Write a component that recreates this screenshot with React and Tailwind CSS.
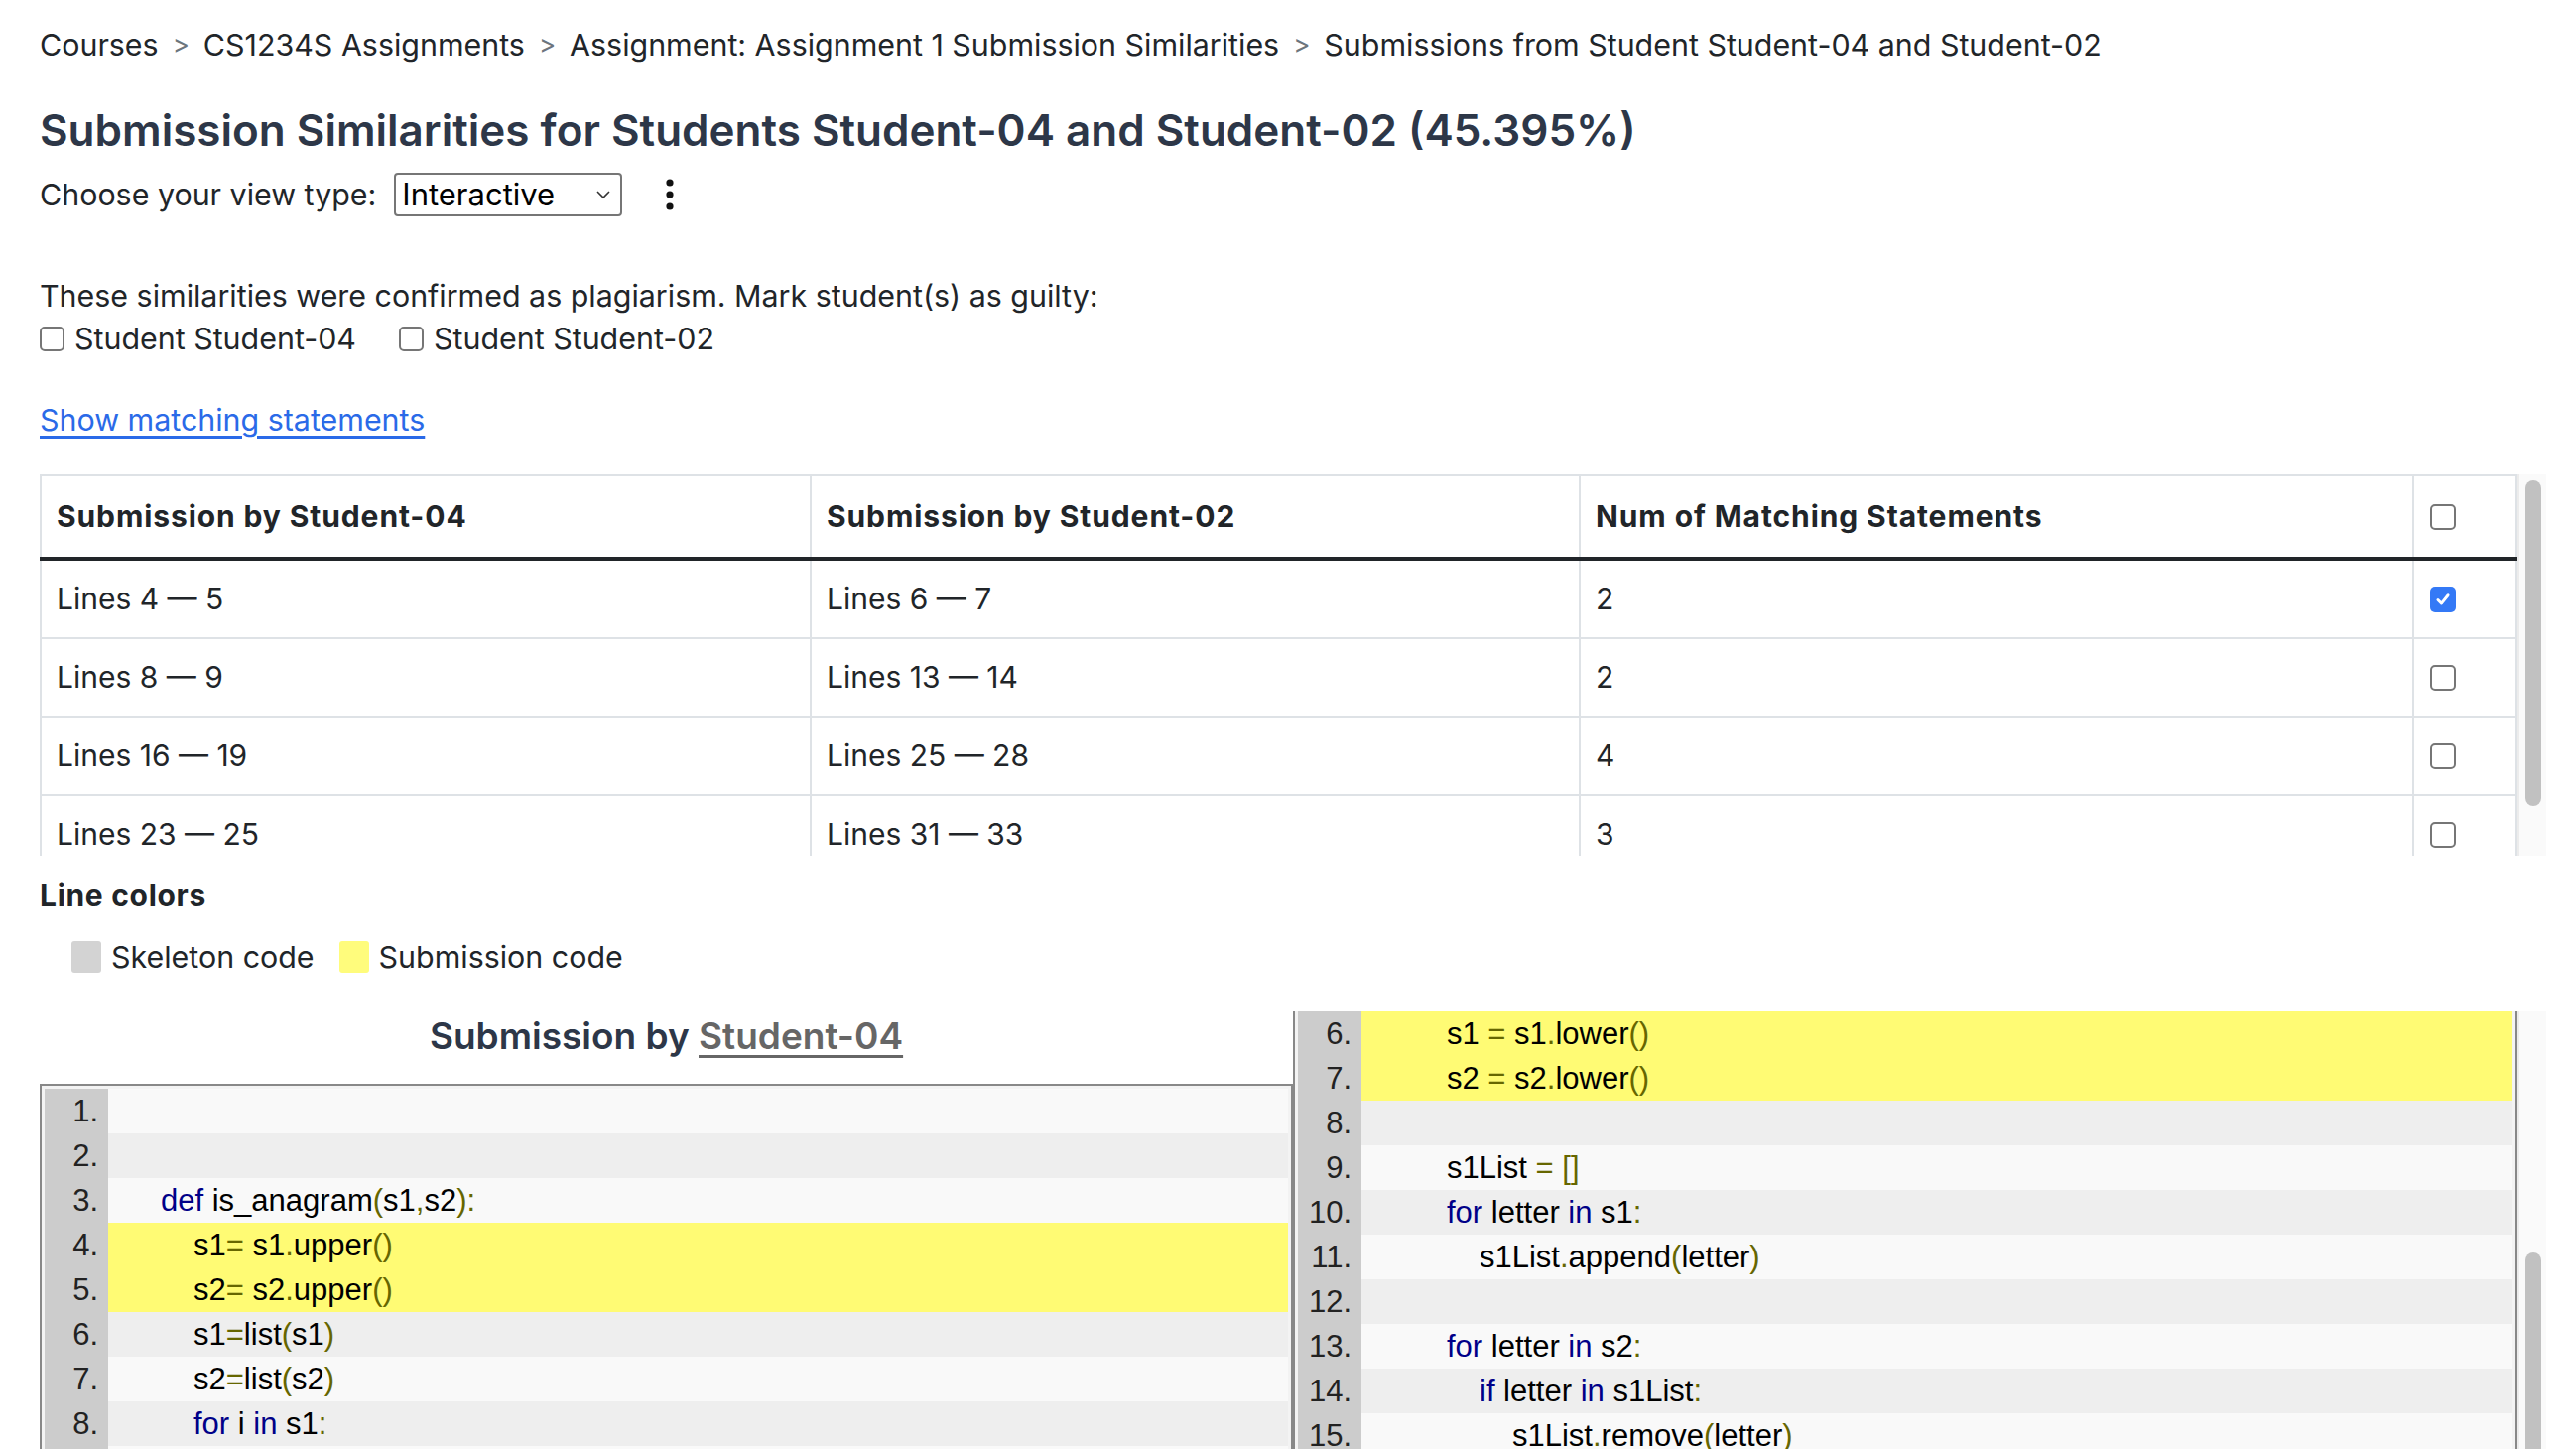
import React, { useLayoutEffect, useRef } from "react";

const TOK = { k: "text-[#000088]", p: "text-[#666600]", t: "text-black" };

const leftCode = [
  [0, []],
  [0, []],
  [0, [["k", "def"], ["t", " is_anagram"], ["p", "("], ["t", "s1"], ["p", ","], ["t", "s2"], ["p", "):"]]],
  [1, [["t", "s1"], ["p", "="], ["t", " s1"], ["p", "."], ["t", "upper"], ["p", "()"]]],
  [1, [["t", "s2"], ["p", "="], ["t", " s2"], ["p", "."], ["t", "upper"], ["p", "()"]]],
  [1, [["t", "s1"], ["p", "="], ["t", "list"], ["p", "("], ["t", "s1"], ["p", ")"]]],
  [1, [["t", "s2"], ["p", "="], ["t", "list"], ["p", "("], ["t", "s2"], ["p", ")"]]],
  [1, [["k", "for"], ["t", " i "], ["k", "in"], ["t", " s1"], ["p", ":"]]],
  [2, [["k", "if"], ["t", " i "], ["k", "in"], ["t", " s2"], ["p", ":"]]],
  [3, [["t", "s2"], ["p", "."], ["t", "remove"], ["p", "("], ["t", "i"], ["p", ")"]]],
  [2, [["k", "else"], ["p", ":"]]],
  [3, [["k", "return"], ["t", " False"]]],
];

const rightCode = [
  [0, []],
  [0, []],
  [0, [["k", "def"], ["t", " is_anagram"], ["p", "("], ["t", "s1"], ["p", ","], ["t", " s2"], ["p", "):"]]],
  [1, [["t", "s1 "], ["p", "="], ["t", " s1"], ["p", "."], ["t", "replace"], ["p", "("], ["t", "' '"], ["p", ","], ["t", " ''"], ["p", ")"]]],
  [1, [["t", "s2 "], ["p", "="], ["t", " s2"], ["p", "."], ["t", "replace"], ["p", "("], ["t", "' '"], ["p", ","], ["t", " ''"], ["p", ")"]]],
  [1, [["t", "s1 "], ["p", "="], ["t", " s1"], ["p", "."], ["t", "lower"], ["p", "()"]]],
  [1, [["t", "s2 "], ["p", "="], ["t", " s2"], ["p", "."], ["t", "lower"], ["p", "()"]]],
  [0, []],
  [1, [["t", "s1List "], ["p", "="], ["t", " "], ["p", "[]"]]],
  [1, [["k", "for"], ["t", " letter "], ["k", "in"], ["t", " s1"], ["p", ":"]]],
  [2, [["t", "s1List"], ["p", "."], ["t", "append"], ["p", "("], ["t", "letter"], ["p", ")"]]],
  [0, []],
  [1, [["k", "for"], ["t", " letter "], ["k", "in"], ["t", " s2"], ["p", ":"]]],
  [2, [["k", "if"], ["t", " letter "], ["k", "in"], ["t", " s1List"], ["p", ":"]]],
  [3, [["t", "s1List"], ["p", "."], ["t", "remove"], ["p", "("], ["t", "letter"], ["p", ")"]]],
  [2, [["k", "else"], ["p", ":"]]],
  [3, [["k", "return"], ["t", " False"]]],
  [0, []],
  [1, [["k", "return"], ["t", " len"], ["p", "("], ["t", "s1List"], ["p", ")"], ["t", " "], ["p", "=="], ["t", " 0"]]],
  [0, []],
  [0, []],
  [0, [["k", "def"], ["t", " main"], ["p", "():"]]],
  [1, [["t", "word1 "], ["p", "="], ["t", " input"], ["p", "("], ["t", "\"First word: \""], ["p", ")"]]],
  [1, [["t", "word2 "], ["p", "="], ["t", " input"], ["p", "("], ["t", "\"Second word: \""], ["p", ")"]]],
  [0, []],
  [1, [["k", "if"], ["t", " is_anagram"], ["p", "("], ["t", "word1"], ["p", ","], ["t", " word2"], ["p", "):"]]],
  [2, [["t", "print"], ["p", "("], ["t", "\"Anagram\""], ["p", ")"]]],
  [1, [["k", "else"], ["p", ":"]]],
  [2, [["t", "print"], ["p", "("], ["t", "\"Not anagram\""], ["p", ")"]]],
  [0, []],
  [0, []],
  [0, [["k", "if"], ["t", " __name__ "], ["p", "=="], ["t", " \"__main__\""], ["p", ":"]]],
  [1, [["t", "main"], ["p", "()"]]],
  [0, []],
  [0, []],
  [0, []],
  [0, []],
  [0, []],
];

const INDENT = ["pl-[53px]", "pl-[86px]", "pl-[119px]", "pl-[152px]"];

function CodeLine({ n, indent, tokens, hl, lineRef }) {
  const bg = hl ? "bg-[#fffb74]" : n % 2 === 0 ? "bg-[#eeeeee]" : "bg-[#f9f9f9]";
  return (
    <div ref={lineRef} className="flex h-[45px] leading-[45px]">
      <div className="w-[64px] shrink-0 bg-[#cccccc] pr-[10px] text-right text-[#222222]">{n}.</div>
      <div className={`flex-1 whitespace-pre ${bg} ${INDENT[indent]}`}>
        {tokens.map(([t, s], i) => (
          <span key={i} className={TOK[t]}>
            {s}
          </span>
        ))}
      </div>
    </div>
  );
}

function CodeBox({ lines, hlSet, targetLine, targetRef }) {
  return (
    <div className="border-2 border-[#888888] bg-[#f3f3f3] p-[3px] font-['Liberation_Sans',Arial,sans-serif] text-[31px]">
      {lines.map(([ind, toks], i) => (
        <CodeLine
          key={i}
          n={i + 1}
          indent={ind}
          tokens={toks}
          hl={hlSet.includes(i + 1)}
          lineRef={targetLine === i + 1 ? targetRef : undefined}
        />
      ))}
    </div>
  );
}

function Check({ checked, size = "h-[26px] w-[26px]" }) {
  if (checked) {
    return (
      <span className={`inline-flex ${size} items-center justify-center rounded-[5px] bg-[#3479f6]`}>
        <svg viewBox="0 0 16 16" className="h-[18px] w-[18px]">
          <path d="M3.5 8.5 L6.6 11.6 L12.5 4.2" fill="none" stroke="white" strokeWidth="2.6" strokeLinecap="round" strokeLinejoin="round" />
        </svg>
      </span>
    );
  }
  return <span className={`inline-block ${size} rounded-[5px] border-2 border-[#767676] bg-white`} />;
}

function PanelTitle({ name }) {
  return (
    <h2 className="text-center text-[37px] leading-[50px] font-semibold text-[#2d3748]">
      Submission by <span className="text-[#666666] underline decoration-[3px] underline-offset-[6px]">{name}</span>
    </h2>
  );
}

function Track({ pad, thumb }) {
  return (
    <div className={`flex w-[29px] shrink-0 flex-col border-l-2 border-[#ececec] bg-[#fafafa] pl-[6px] ${pad}`}>
      <div className={`w-[16px] shrink-0 rounded-full bg-[#c1c1c1] ${thumb}`} />
    </div>
  );
}

const rows = [
  ["Lines 4 — 5", "Lines 6 — 7", "2", true],
  ["Lines 8 — 9", "Lines 13 — 14", "2", false],
  ["Lines 16 — 19", "Lines 25 — 28", "4", false],
  ["Lines 23 — 25", "Lines 31 — 33", "3", false],
];

const TH = "border-2 border-b-4 border-[#dee2e6] border-b-[#212529] px-[15px] py-[21px] text-left text-[30px] leading-[39px] font-bold tracking-[0.9px]";
const TD = "border-2 border-[#dee2e6] px-[15px] py-[19px] text-[30px] leading-[39px]";

export default function App() {
  const scrollRef = useRef(null);
  const targetRef = useRef(null);

  useLayoutEffect(() => {
    const s = scrollRef.current;
    const t = targetRef.current;
    if (s && t) {
      s.scrollTop = t.getBoundingClientRect().top - s.getBoundingClientRect().top + s.scrollTop;
    }
  }, []);

  const crumbs = [
    "Courses",
    "CS1234S Assignments",
    "Assignment: Assignment 1 Submission Similarities",
    "Submissions from Student Student-04 and Student-02",
  ];

  return (
    <div className="h-[1460px] overflow-hidden bg-white pl-[40px] pr-[30px] pt-[25px] font-['Inter',sans-serif] text-[30.4px] leading-[40px] text-[#212529]">
      <nav className="flex items-center">
        {crumbs.map((c, i) => (
          <React.Fragment key={i}>
            {i > 0 && <span className="px-[14px] text-[26px] text-[#6c757d]">&gt;</span>}
            <span>{c}</span>
          </React.Fragment>
        ))}
      </nav>

      <h1 className="mt-[40px] text-[44px] leading-[53px] font-semibold text-[#2d3748]">
        Submission Similarities for Students Student-04 and Student-02 (45.395%)
      </h1>

      <div className="mt-[16px] flex items-center">
        <span>Choose your view type:</span>
        <div className="ml-[18px] flex h-[44px] w-[230px] items-center justify-between rounded-[4px] border-2 border-[#767676] pl-[6px] pr-[10px] text-[31px] text-black">
          <span>Interactive</span>
          <svg viewBox="0 0 14 10" className="h-[10px] w-[14px]">
            <path d="M1 2 L7 8 L13 2" fill="none" stroke="#333" strokeWidth="1.6" />
          </svg>
        </div>
        <svg viewBox="0 0 8 32" className="ml-[44px] h-[32px] w-[8px]">
          <circle cx="4" cy="4" r="3.6" fill="#111" />
          <circle cx="4" cy="16" r="3.6" fill="#111" />
          <circle cx="4" cy="28" r="3.6" fill="#111" />
        </svg>
      </div>

      <p className="mt-[60px]">These similarities were confirmed as plagiarism. Mark student(s) as guilty:</p>
      <div className="mt-[3px] flex items-center">
        <Check size="h-[25px] w-[25px]" />
        <span className="ml-[10px]">Student Student-04</span>
        <span className="ml-[43px] flex items-center">
          <Check size="h-[25px] w-[25px]" />
        </span>
        <span className="ml-[10px]">Student Student-02</span>
      </div>

      <a href="#" className="mt-[42px] inline-block text-[#2a6ae8] underline underline-offset-[5px]">
        Show matching statements
      </a>

      <div className="mt-[35px] flex h-[384px]">
        <div className="flex-1 overflow-hidden">
          <table className="w-full border-collapse border-2 border-[#dee2e6]">
            <colgroup>
              <col className="w-[776px]" />
              <col className="w-[775px]" />
              <col className="w-[840px]" />
              <col />
            </colgroup>
            <thead>
              <tr>
                <th className={TH}>Submission by Student-04</th>
                <th className={TH}>Submission by Student-02</th>
                <th className={TH}>Num of Matching Statements</th>
                <th className="border-2 border-b-4 border-[#dee2e6] border-b-[#212529] px-[16px] py-[21px] text-left leading-[39px]">
                  <span className="flex items-center">
                    <Check />
                  </span>
                </th>
              </tr>
            </thead>
            <tbody>
              {rows.map(([a, b, n, c], i) => (
                <tr key={i}>
                  <td className={TD}>{a}</td>
                  <td className={TD}>{b}</td>
                  <td className={TD}>{n}</td>
                  <td className="border-2 border-[#dee2e6] px-[16px] py-[19px] leading-[39px]">
                    <span className="flex items-center">
                      <Check checked={c} />
                    </span>
                  </td>
                </tr>
              ))}
            </tbody>
          </table>
        </div>
        <Track pad="pt-[6px]" thumb="h-[328px]" />
      </div>

      <h3 className="mt-[20px] text-[30px] font-bold tracking-[0.7px]">Line colors</h3>
      <div className="mt-[22px] flex items-center pl-[32px]">
        <span className="h-[32px] w-[30px] rounded-[3px] bg-[#d3d3d3]" />
        <span className="ml-[10px]">Skeleton code</span>
        <span className="ml-[25px] h-[32px] w-[30px] rounded-[3px] bg-[#fffc7c]" />
        <span className="ml-[10px]">Submission code</span>
      </div>

      <div className="mt-[35px] grid grid-cols-2">
        <div>
          <PanelTitle name="Student-04" />
          <div className="mt-[23px]">
            <CodeBox lines={leftCode} hlSet={[4, 5]} />
          </div>
        </div>
        <div className="flex h-[1400px]">
          <div ref={scrollRef} className="flex-1 overflow-hidden">
            <PanelTitle name="Student-02" />
            <div className="mt-[23px]">
              <CodeBox lines={rightCode} hlSet={[6, 7]} targetLine={6} targetRef={targetRef} />
            </div>
          </div>
          <Track pad="pt-[243px]" thumb="h-[900px]" />
        </div>
      </div>
    </div>
  );
}
